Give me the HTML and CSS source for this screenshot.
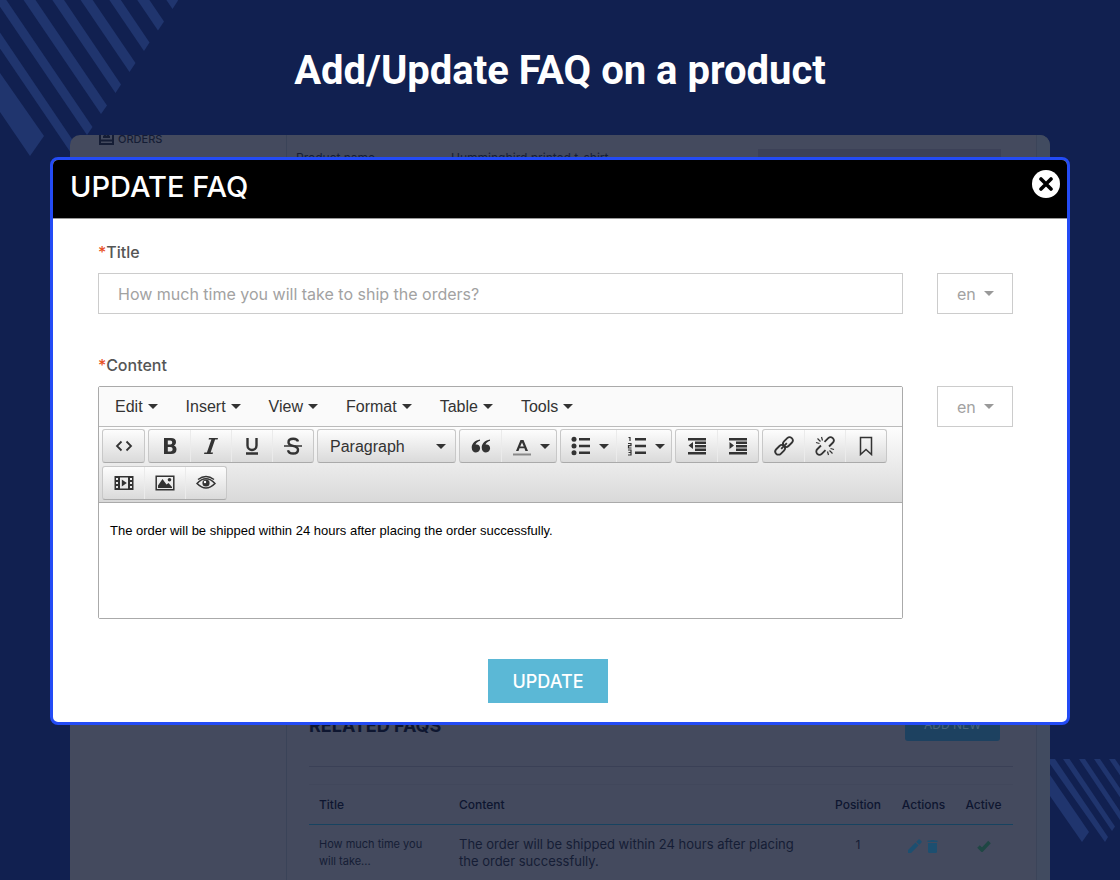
FILE: index.html
```html
<!DOCTYPE html>
<html lang="en">
<head>
    <meta charset="UTF-8">
    <meta name="viewport" content="width=device-width, initial-scale=1.0">
    <title>Add/Update FAQ on a product</title>
    <link rel="stylesheet" href="styles.css">
</head>
<body>
    <svg class="stripes stripes-top" width="180" height="160" viewBox="0 0 180 160" aria-hidden="true">
        <path d="M0 73L44 136L30 156L0 112z"/>
        <path d="M78 148l-5 8-110-162h11z"/>
        <path d="M92.500 127l-5.500 8-110-162h11z"/>
        <path d="M107 105.500l-6 8.500-110-162h12z"/>
        <path d="M121 84.500l-5.500 8.500-110-162h12z"/>
        <path d="M135.500 63l-6 9-110-162h12z"/>
        <path d="M149.500 42.500l-5.500 8.500-110-162h12z"/>
        <path d="M164 21.500l-6 9-110-162h12z"/>
        <path d="M178 .500l-5.500 8.500-110-162h12z"/>
    </svg>
    <svg class="stripes stripes-bottom" width="70" height="84" viewBox="0 0 70 84" aria-hidden="true">
        <path d="M0 16L39 73L32 83L0 37z"/>
        <path d="M0 0H5L58 78L55 83L0 5z"/>
        <path d="M13 0H19.500L65 67.500L62 72z"/>
        <path d="M29 0H35L82 70V79z"/>
        <path d="M44 0H50L82 47V56z"/>
        <path d="M59 0H65L82 25V34z"/>
    </svg>

    <header class="page-header">
        <h1>Add/Update FAQ on a product</h1>
    </header>

    <main class="stage">
        <div class="backdrop" aria-hidden="true">
            <div class="sidebar">
                <svg width="15" height="14" viewBox="0 0 15 14"><path d="M1 3v10h13V3M1 9.500h13M4 6h7M5 5l2.500-2L10 5" fill="none" stroke="currentColor" stroke-width="2"/></svg>
                <span>ORDERS</span>
            </div>
            <div class="product">
                <div class="product-row">
                    <span class="product-label">Product name</span>
                    <span class="product-name">Hummingbird printed t-shirt</span>
                    <span class="product-box"></span>
                </div>
                <div class="related">
                    <h2>RELATED FAQS</h2>
                    <span class="add-new">ADD NEW</span>
                </div>
                <table class="faq-table">
                    <thead>
                        <tr>
                            <th class="col-title">Title</th>
                            <th>Content</th>
                            <th class="col-position">Position</th>
                            <th class="col-actions">Actions</th>
                            <th class="col-active">Active</th>
                        </tr>
                    </thead>
                    <tbody>
                        <tr>
                            <td class="faq-title">How much time you will take...</td>
                            <td class="faq-content">The order will be shipped within 24 hours after placing the order successfully.</td>
                            <td class="col-position">1</td>
                            <td class="col-actions">
                                <svg class="icon-action" width="14" height="14" viewBox="0 0 14 14"><path d="M0 11v3h3l7.500-7.500-3-3zM8.300 2.700l3 3L13.500 3.500a1 1 0 0 0 0-1.200L11.700.500a1 1 0 0 0-1.200 0z"/></svg>
                                <svg class="icon-action" width="14" height="14" viewBox="0 0 14 14"><path d="M3 4h9v8.500a1.500 1.500 0 0 1-1.500 1.500h-6A1.500 1.500 0 0 1 3 12.500zM2.500 1.500h3L6 1h3l.5.500h3V3h-10z"/></svg>
                            </td>
                            <td class="col-active">
                                <svg width="14" height="12" viewBox="0 0 14 12"><path d="M1.500 6.500L5 10L12.500 2" fill="none" stroke="#1f4744" stroke-width="3.600"/></svg>
                            </td>
                        </tr>
                    </tbody>
                </table>
            </div>
            <div class="gutter"></div>
        </div>

        <section class="modal" role="dialog" aria-labelledby="modal-title">
            <div class="modal-header">
                <h2 id="modal-title">UPDATE FAQ</h2>
                <button type="button" class="close" aria-label="Close">
                    <svg width="14" height="14" viewBox="0 0 14 14"><path d="M2 2l10 10M12 2L2 12" stroke="#000" stroke-width="3.600" stroke-linecap="round"/></svg>
                </button>
            </div>

            <form class="faq-form">
                <label for="title"><span class="required">*</span>Title</label>
                <div class="field-row">
                    <input type="text" id="title" value="How much time you will take to ship the orders?">
                    <div class="select lang">
                        <select aria-label="Title language"><option>en</option></select>
                        <span class="caret"></span>
                    </div>
                </div>

                <label for="content"><span class="required">*</span>Content</label>
                <div class="field-row">
                    <div class="editor">
                        <div class="menubar">
                            <button type="button">Edit <span class="caret"></span></button>
                            <button type="button">Insert <span class="caret"></span></button>
                            <button type="button">View <span class="caret"></span></button>
                            <button type="button">Format <span class="caret"></span></button>
                            <button type="button">Table <span class="caret"></span></button>
                            <button type="button">Tools <span class="caret"></span></button>
                        </div>
                        <div class="toolbar">
                            <div class="btn-group">
                                <button type="button" aria-label="Source code"><svg viewBox="0 0 20 20"><path class="line mid" d="M7.500 5.500L3 10l4.500 4.500M12.500 5.500L17 10l-4.500 4.500"/></svg></button>
                            </div>
                            <div class="btn-group">
                                <button type="button" aria-label="Bold"><svg viewBox="0 0 20 20"><path fill-rule="evenodd" d="M4 2h7c3.300 0 5 1.500 5 4 0 1.700-.8 2.900-2.200 3.500 1.800.6 2.700 1.900 2.700 3.900 0 3-2 4.600-5.500 4.600H4zM7.800 4.500v4h2.400c1.300 0 2-.7 2-2s-.7-2-2-2zM7.800 11v4.400h2.600c1.400 0 2.200-.8 2.200-2.200S11.800 11 10.400 11z"/></svg></button>
                                <button type="button" aria-label="Italic"><svg viewBox="0 0 20 20"><path d="M8 2h9l-.4 1.600h-2.500L9.600 16.400H12l-.4 1.600H3l.4-1.600h2.500l4.500-12.800H7.600z"/></svg></button>
                                <button type="button" aria-label="Underline"><svg viewBox="0 0 20 20"><path class="line" d="M5.500 2v7.500a4.500 4.500 0 0 0 9 0V2M4 17.500h12"/></svg></button>
                                <button type="button" aria-label="Strikethrough"><svg viewBox="0 0 20 20"><path class="line" d="M15 5.500C14.500 3.700 12.700 2.800 10.300 2.800 7.500 2.800 5.500 4 5.500 6.200c0 2 1.500 3 4.500 3.700s5 1.500 5 3.800-2 3.800-4.800 3.800-4.800-1.200-5.200-3.300"/><path class="line thin" d="M1 10h18"/></svg></button>
                            </div>
                            <div class="btn-group">
                                <div class="select format">
                                    <select aria-label="Block format"><option>Paragraph</option></select>
                                    <span class="caret"></span>
                                </div>
                            </div>
                            <div class="btn-group">
                                <button type="button" aria-label="Blockquote"><svg viewBox="0 0 20 20"><path d="M9 3.500v1.200C6.500 5.700 4.800 7 4.600 8.800c.3-.1.600-.2 1-.2 2 0 3.500 1.500 3.500 3.700S7.400 16.500 5 16.500s-4.300-1.800-4.300-5C.7 7.500 4 4.200 9 3.500zM19 3.500v1.200c-2.500 1-4.200 2.300-4.400 4.100.3-.1.600-.2 1-.2 2 0 3.500 1.500 3.500 3.700s-1.700 4.200-4.100 4.200-4.300-1.800-4.300-5c0-4 3.300-7.300 8.300-8z"/></svg></button>
                                <button type="button" class="split" aria-label="Text color"><svg viewBox="0 0 20 20"><path fill-rule="evenodd" d="M8.500 4h3L16 15h-2.600l-1-2.700H7.500L6.500 15H4zM10 6.500l-1.800 4h3.600z"/><path d="M1 17.500h18v2H1z" fill="#888"/></svg><span class="caret"></span></button>
                            </div>
                            <div class="btn-group">
                                <button type="button" class="split" aria-label="Bullet list"><svg viewBox="0 0 20 20"><circle cx="3" cy="3.300" r="2.500"/><circle cx="3" cy="10" r="2.500"/><circle cx="3" cy="16.700" r="2.500"/><path class="line" d="M8 3.300h11M8 10h11M8 16.700h11"/></svg><span class="caret"></span></button>
                                <button type="button" class="split" aria-label="Numbered list"><svg viewBox="0 0 20 20"><path class="line" d="M8 3.300h11M8 10h11M8 16.700h11"/><path class="line hair" d="M1.500 1.500h1.500V5M1 7.500h3v2.200H1.500v2.300H4.500M1 14h3v5H1M1.500 16.500h2.500"/></svg><span class="caret"></span></button>
                            </div>
                            <div class="btn-group">
                                <button type="button" aria-label="Decrease indent"><svg viewBox="0 0 20 20"><path d="M1 2h18v2.400H1zM8 5.500h11v2.400H8zM8 9h11v2.400H8zM8 12.500h11v2.400H8zM1 16h18v2.400H1zM6 6v7L1.500 9.500z"/></svg></button>
                                <button type="button" aria-label="Increase indent"><svg viewBox="0 0 20 20"><path d="M1 2h18v2.400H1zM8 5.500h11v2.400H8zM8 9h11v2.400H8zM8 12.500h11v2.400H8zM1 16h18v2.400H1zM1.500 6v7L6 9.500z"/></svg></button>
                            </div>
                            <div class="btn-group">
                                <button type="button" aria-label="Insert link"><svg viewBox="0 0 20 20"><g class="line mid" transform="rotate(-45 10 10)"><rect x="-1" y="6.800" width="11" height="6.400" rx="3.200"/><rect x="10" y="6.800" width="11" height="6.400" rx="3.200"/><path d="M6 10h8"/></g></svg></button>
                                <button type="button" aria-label="Remove link"><svg viewBox="0 0 20 20"><g class="line mid" transform="rotate(-45 10 10)"><path d="M7.500 6.800H2.200a3.200 3.200 0 0 0 0 6.400h5.300M12.500 6.800h5.300a3.200 3.200 0 0 1 0 6.400h-5.300"/></g><path class="line hair" d="M6.500 1l1 3.500M1 6.500L4.500 7.500M2.500 2.500l3 3M13.500 19l-1-3.500M19 13.500l-3.500-1M17.500 17.500l-3-3"/></svg></button>
                                <button type="button" aria-label="Anchor"><svg viewBox="0 0 20 20"><path class="line thin" d="M4.500 1.500h11v17L10 13.500l-5.500 5z"/></svg></button>
                            </div>
                            <div class="btn-group">
                                <button type="button" aria-label="Insert video"><svg viewBox="0 0 20 20"><path fill-rule="evenodd" d="M.5 3h19v14H.5zM6 4.500v11h8v-11zM2 5v2h2V5zM2 9v2h2V9zM2 13v2h2v-2zM16 5v2h2V5zM16 9v2h2V9zM16 13v2h2v-2z"/><path d="M7.800 6.500v7l5-3.500z"/></svg></button>
                                <button type="button" aria-label="Insert image"><svg viewBox="0 0 20 20"><path class="line thin" d="M1.200 3.200h17.600v13.600H1.200z"/><path d="M3 15v-2.500L7.500 6l4 5.500 2-1.500 3.500 4v1z"/><circle cx="14.500" cy="6.800" r="1.800"/></svg></button>
                                <button type="button" aria-label="Preview"><svg viewBox="0 0 20 20"><path class="line thin" d="M1 10.500Q5.500 5.800 10 5.800t9 4.700Q14.500 15 10 15t-9-4.500zM2 6.500Q6 3.500 10 3.500t8 3"/><circle cx="10" cy="10" r="3.600"/><circle cx="9" cy="9" r="1.200" fill="#fff"/></svg></button>
                            </div>
                        </div>
                        <textarea id="content">The order will be shipped within 24 hours after placing the order successfully.</textarea>
                    </div>
                    <div class="select lang">
                        <select aria-label="Content language"><option>en</option></select>
                        <span class="caret"></span>
                    </div>
                </div>

                <div class="form-actions">
                    <button type="submit" class="update">UPDATE</button>
                </div>
            </form>
        </section>
    </main>
</body>
</html>
```

FILE: styles.css
```css
* {
    box-sizing: border-box;
}

body {
    font-family: Inter, "Open Sans", sans-serif;
    margin: 0;
    min-height: 100vh;
    display: flex;
    flex-direction: column;
    position: relative;
    background-color: #112050;
}

h1, h2 {
    margin: 0;
}

button, input, select, textarea {
    font: inherit;
    margin: 0;
}

button {
    cursor: pointer;
}

/* Background decoration */
.stripes {
    position: absolute;
    fill: #20356e;
}

.stripes-top {
    top: 0;
    left: 0;
}

.stripes-bottom {
    right: 0;
    bottom: 38px;
}

.page-header {
    position: relative;
    height: 135px;
    padding-top: 47px;
    text-align: center;
}

.page-header h1 {
    font-family: Roboto, sans-serif;
    font-size: 40px;
    line-height: 48px;
    font-weight: 700;
    color: white;
}

.stage {
    position: relative;
    flex: 1;
    display: flex;
    padding: 0 70px;
}

/* Dimmed page behind the modal */
.backdrop {
    flex: 1;
    display: flex;
    overflow: hidden;
    border-radius: 10px 10px 0 0;
    background-color: #444a5e;
    color: #151d35;
    font-size: 12px;
    line-height: 17px;
}

.sidebar {
    width: 216px;
    padding-left: 29px;
    display: flex;
    align-items: flex-start;
    gap: 4px;
    font-size: 11px;
    line-height: 8px;
    font-weight: 500;
}

.sidebar svg {
    margin-top: -4px;
}

.product {
    flex: 1;
    padding: 14px 23px 0 22px;
    border-left: 1px solid #3a4358;
}

.gutter {
    width: 14px;
    background-color: #414b60;
    border-left: 1px solid #3b4459;
}

.product-row {
    display: grid;
    grid-template-columns: 155px 1fr 243px;
    align-items: start;
    height: 563px;
    padding-right: 12px;
    margin-left: -13px;
}

.product-box {
    height: 30px;
    background-color: #3c4157;
}

.related {
    display: flex;
    justify-content: space-between;
    padding: 0 13px 25px 0;
    border-bottom: 1px solid #3a4056;
}

.related h2 {
    font-size: 18px;
    line-height: 28px;
    font-weight: 700;
    color: #0e1630;
}

.add-new {
    width: 95px;
    height: 29px;
    border-radius: 3px;
    background-color: #1d4160;
    color: #48647b;
    text-align: center;
    line-height: 26px;
}

.faq-table {
    width: 100%;
    margin-top: 17px;
    border-collapse: collapse;
    table-layout: fixed;
}

.faq-table th, .faq-table td {
    padding: 11px 10px;
    text-align: left;
    vertical-align: top;
}

.faq-table th {
    font-weight: 500;
    color: #0e1630;
    border-top: 1px solid #41475b;
    border-bottom: 1px solid #174360;
}

.faq-table .faq-title {
    font-size: 11px;
}

.faq-table .faq-content {
    font-size: 13px;
}

.faq-table .col-title {
    width: 140px;
}

.faq-table .col-position, .faq-table .col-actions, .faq-table .col-active {
    padding-left: 0;
    padding-right: 0;
    text-align: center;
}

.faq-table .col-position {
    width: 70px;
}

.faq-table .col-actions {
    width: 61px;
}

.faq-table .col-active {
    width: 59px;
}

.faq-table svg {
    vertical-align: middle;
}

.icon-action {
    fill: #1d4f70;
}

/* Modal */
.modal {
    position: absolute;
    top: 22px;
    left: 50px;
    right: 50px;
    overflow: hidden;
    border: 3px solid #234bf5;
    border-radius: 8px;
    background-color: white;
}

.modal-header {
    display: flex;
    justify-content: space-between;
    align-items: flex-start;
    height: 59px;
    padding: 10px 7px 0 17px;
    background-color: black;
    border-bottom: 1px solid #999;
}

.modal-header h2 {
    font-size: 29px;
    line-height: 34px;
    font-weight: 500;
    color: white;
}

.close {
    display: grid;
    place-items: center;
    width: 28px;
    height: 28px;
    padding: 0;
    border: none;
    border-radius: 50%;
    background-color: white;
}

.faq-form {
    padding: 22px 54px 19px 45px;
}

.faq-form label {
    display: block;
    height: 32px;
    font-size: 16px;
    line-height: 22px;
    font-weight: 500;
    color: #555;
}

.required {
    color: #e8501f;
}

.field-row {
    display: flex;
    align-items: flex-start;
    gap: 34px;
    margin-bottom: 40px;
}

.field-row input {
    flex: 1;
    min-width: 0;
    height: 41px;
    padding: 0 19px;
    border: 1px solid #ccc;
    background-color: white;
    font-size: 16px;
    color: #a2a2a2;
}

.caret {
    display: inline-block;
    border: 5px solid transparent;
    border-top-color: #333;
    border-bottom: none;
}

/* The caret shares the grid cell of its drop-down */
.select {
    display: grid;
    align-items: center;
}

.select select, .select .caret {
    grid-area: 1 / 1;
}

.select select {
    appearance: none;
    width: 100%;
    height: 100%;
    border: none;
    background: none;
}

.select .caret {
    justify-self: end;
    pointer-events: none;
}

.lang {
    width: 76px;
    height: 41px;
    border: 1px solid #ccc;
}

.lang select {
    padding: 0 19px;
    font-size: 16px;
    color: #a2a2a2;
}

.lang .caret {
    margin-right: 18px;
    border-top-color: #999;
}

/* Editor */
.editor {
    flex: 1;
    min-width: 0;
    border: 1px solid #aaa;
    border-radius: 2px;
    font-family: "Liberation Sans", Arial, sans-serif;
    color: #333;
}

.menubar {
    display: flex;
    height: 40px;
    padding-left: 2px;
    background-color: #fafafa;
    border-bottom: 1px solid #bbb;
}

.menubar button {
    display: flex;
    align-items: center;
    gap: 5px;
    padding: 0 14px;
    border: none;
    background: none;
    font-size: 16px;
    color: #333;
}

.toolbar {
    display: flex;
    flex-wrap: wrap;
    gap: 3px;
    padding: 2px 3px;
    border-bottom: 1px solid #aaa;
    background-image: linear-gradient(#fdfdfd, #d9d9d9);
}

.btn-group {
    display: flex;
    height: 34px;
    border: 1px solid #c8c8c8;
    border-bottom-color: #aaa;
    border-radius: 3px;
    background-image: linear-gradient(#fdfdfd, #dadada);
}

.btn-group button {
    display: flex;
    align-items: center;
    justify-content: center;
    gap: 8px;
    width: 41px;
    padding: 0;
    border: none;
    background: none;
}

.btn-group button + button {
    border-left: 1px solid #ebebeb;
}

.btn-group .split {
    width: 55px;
    padding-left: 3px;
}

.btn-group svg {
    width: 20px;
    height: 20px;
    fill: #333;
}

.btn-group .line {
    fill: none;
    stroke: #333;
    stroke-width: 2.4;
}

.btn-group .mid {
    stroke-width: 1.8;
}

.btn-group .thin {
    stroke-width: 1.5;
}

.btn-group .hair {
    stroke-width: 1.2;
}

.format {
    width: 137px;
}

.format select {
    padding: 0 12px;
    font-size: 16px;
    color: #333;
}

.format .caret {
    margin-right: 9px;
}

.editor textarea {
    display: block;
    width: 100%;
    height: 115px;
    padding: 19px 11px;
    border: none;
    resize: none;
    font-size: 13px;
    line-height: 18px;
    color: black;
}

.form-actions {
    padding-right: 15px;
    text-align: center;
}

.update {
    width: 120px;
    height: 44px;
    padding: 0;
    border: none;
    background-color: #5bb8d6;
    font-size: 18px;
    font-weight: 500;
    color: white;
    vertical-align: top;
}
```
